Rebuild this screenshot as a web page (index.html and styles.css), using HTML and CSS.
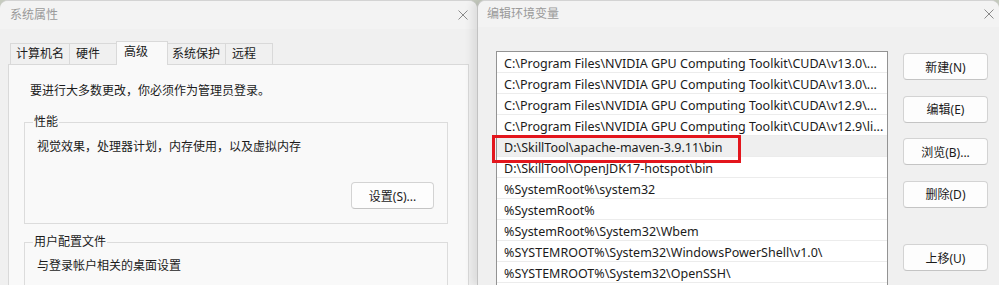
FILE: index.html
```html
<!DOCTYPE html>
<html lang="zh-CN">
<head>
    <meta charset="UTF-8">
    <meta name="viewport" content="width=device-width, initial-scale=1.0">
    <title>系统属性 - 编辑环境变量</title>
    <link rel="stylesheet" href="styles.css">
</head>
<body>
    <div class="window sys-props">
        <div class="titlebar">
            <span class="title">系统属性</span>
            <span class="close">
                <svg width="10" height="10" viewBox="0 0 10 10"><path d="M0.5 0.5L9.5 9.5M9.5 0.5L0.5 9.5" stroke="#8a8a8a" stroke-width="1" fill="none"/></svg>
            </span>
        </div>
        <div class="tabs">
            <div class="tab tab-name">计算机名</div>
            <div class="tab tab-hw">硬件</div>
            <div class="tab tab-adv active">高级</div>
            <div class="tab tab-protect">系统保护</div>
            <div class="tab tab-remote">远程</div>
        </div>
        <div class="tab-panel">
            <p class="intro">要进行大多数更改，你必须作为管理员登录。</p>
            <fieldset class="group">
                <legend>性能</legend>
                <p class="group-text">视觉效果，处理器计划，内存使用，以及虚拟内存</p>
                <div class="group-actions">
                    <button class="btn btn-settings">设置(S)...</button>
                </div>
            </fieldset>
            <fieldset class="group group-profile">
                <legend>用户配置文件</legend>
                <p class="group-text">与登录帐户相关的桌面设置</p>
            </fieldset>
        </div>
    </div>

    <div class="window env-edit">
        <div class="titlebar">
            <span class="title">编辑环境变量</span>
            <span class="close">
                <svg width="10" height="10" viewBox="0 0 10 10"><path d="M0.5 0.5L9.5 9.5M9.5 0.5L0.5 9.5" stroke="#8a8a8a" stroke-width="1" fill="none"/></svg>
            </span>
        </div>
        <div class="env-body">
            <ul class="path-list">
                <li>C:\Program Files\NVIDIA GPU Computing Toolkit\CUDA\v13.0\...</li>
                <li>C:\Program Files\NVIDIA GPU Computing Toolkit\CUDA\v13.0\...</li>
                <li>C:\Program Files\NVIDIA GPU Computing Toolkit\CUDA\v12.9\...</li>
                <li>C:\Program Files\NVIDIA GPU Computing Toolkit\CUDA\v12.9\li...</li>
                <li class="selected">D:\SkillTool\apache-maven-3.9.11\bin</li>
                <li>D:\SkillTool\OpenJDK17-hotspot\bin</li>
                <li>%SystemRoot%\system32</li>
                <li>%SystemRoot%</li>
                <li>%SystemRoot%\System32\Wbem</li>
                <li>%SYSTEMROOT%\System32\WindowsPowerShell\v1.0\</li>
                <li>%SYSTEMROOT%\System32\OpenSSH\</li>
            </ul>
            <div class="side-buttons">
                <button class="btn">新建(N)</button>
                <button class="btn">编辑(E)</button>
                <button class="btn">浏览(B)...</button>
                <button class="btn">删除(D)</button>
                <button class="btn btn-gap">上移(U)</button>
            </div>
        </div>
    </div>
</body>
</html>
```

FILE: styles.css
```css
* {
    box-sizing: border-box;
}
body {
    margin: 0;
    width: 999px;
    height: 285px;
    overflow: hidden;
    display: flex;
    background: #c6cbbf;
    font-family: "Noto Sans", "Noto Sans CJK SC", sans-serif;
    font-size: 12px;
    color: #1b1b1b;
}
.window {
    height: 285px;
    background-color: #f0f0f0;
    border-top: 1px solid #d3d3d3;
    border-radius: 8px 8px 0 0;
}
.sys-props {
    width: 477px;
    flex: none;
}
.env-edit {
    flex: 1;
    position: relative;
    border-left: 1px solid #c2c2c2;
    box-shadow: -5px 0 9px rgba(0, 0, 0, 0.09);
}
.titlebar {
    height: 28px;
    display: flex;
    align-items: center;
    justify-content: space-between;
    padding: 0 9px 0 10px;
    background-color: #f3f3f3;
    border-radius: 8px 8px 0 0;
}
.env-edit .titlebar {
    height: 26px;
    padding: 0 5px 0 9px;
}
.title {
    color: #9a9a9a;
    line-height: 16px;
}
.close {
    display: flex;
    width: 10px;
    height: 10px;
}

/* tabs */
.tabs {
    display: flex;
    align-items: flex-start;
    height: 23px;
    margin-top: 12px;
    padding-left: 10px;
}
.tab {
    height: 21px;
    margin-top: 2px;
    margin-left: -1px;
    line-height: 20px;
    padding-left: 5px;
    border: 1px solid #d9d9d9;
    border-bottom: none;
    background-color: #f0f0f0;
}
.tab:first-child { margin-left: 0; }
.tab-name { width: 60px; }
.tab-hw { width: 48px; padding-left: 6px; }
.tab-adv { width: 52px; padding-left: 7px; }
.tab-protect { width: 59px; padding-left: 4px; }
.tab-remote { width: 48px; padding-left: 6px; }
.tab.active {
    position: relative;
    z-index: 1;
    height: 24px;
    margin-top: 0;
    line-height: 20px;
    background-color: #f9f9f9;
}
.tab-panel {
    width: 461px;
    height: 230px;
    margin-left: 8px;
    padding: 17px 20px 0 15px;
    background-color: #f9f9f9;
    border: 1px solid #d9d9d9;
}
.intro {
    margin: 0 0 0 6px;
    line-height: 17px;
}
.group {
    margin: 15px 0 0;
    padding: 0 12px 14px;
    border: 1px solid #dcdcdc;
}
.group legend {
    margin-left: -4px;
    padding: 0 1px;
    line-height: 16px;
}
.group-text {
    margin: 9px 0 0;
    line-height: 16px;
}
.group-actions {
    display: flex;
    justify-content: flex-end;
    margin-top: 27px;
}
.group-profile {
    margin-top: 10px;
}
.group-profile .group-text {
    margin-top: 8px;
}

/* buttons */
.btn {
    font: inherit;
    color: #1b1b1b;
    height: 27px;
    padding: 0;
    background-color: #fdfdfd;
    border: 1px solid #d3d3d3;
    border-bottom-color: #c4c4c4;
    border-radius: 4px;
}
.btn-settings {
    width: 83px;
    margin-right: 1px;
}

/* env editor */
.env-body {
    display: flex;
    align-items: flex-start;
    padding: 24px 0 0 18px;
}
.path-list {
    list-style: none;
    margin: 0;
    padding: 0;
    width: 392px;
    height: 240px;
    background-color: #ffffff;
    border: 1px solid #939393;
    border-bottom: none;
}
.path-list li {
    height: 21px;
    padding: 2px 0 0 7px;
    line-height: 20px;
    white-space: nowrap;
    overflow: hidden;
    border-bottom: 1px solid #ececec;
    font-size: 12.5px;
}
.path-list li.selected {
    position: relative;
    overflow: visible;
    background-color: #efefef;
}
.path-list li.selected::after {
    content: "";
    position: absolute;
    left: -5px;
    top: -1px;
    width: 243px;
    height: 22px;
    border: 3px solid #e3161d;
}
.side-buttons {
    display: flex;
    flex-direction: column;
    gap: 15.6px;
    width: 85px;
    margin: 2px 0 0 15px;
}
.btn-gap {
    margin-top: 21px;
}
```
